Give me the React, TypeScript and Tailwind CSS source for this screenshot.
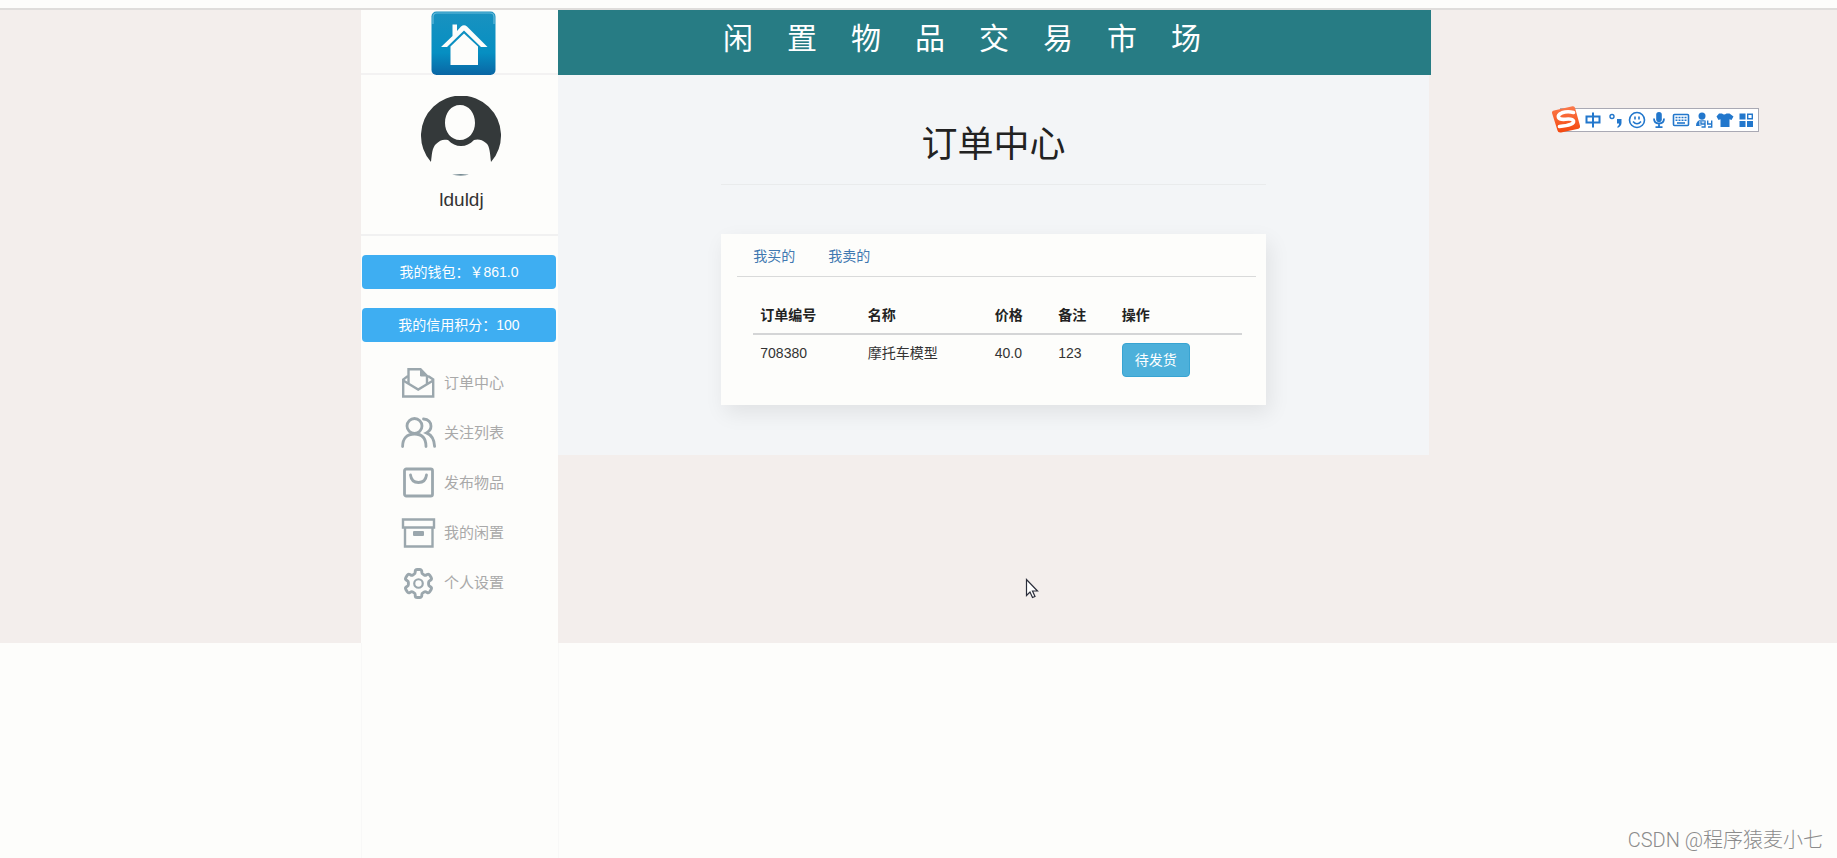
import React from 'react';

const ICON_PROPS = {
  viewBox: '0 0 35 33',
  fill: 'none',
  stroke: 'currentColor',
  strokeWidth: 2.8,
  className: 'w-[35px] h-[33px] shrink-0',
  'aria-hidden': true,
} as const;

const MailIcon = () => (
  <svg {...ICON_PROPS} strokeWidth={2.4}>
    <path d="M7 9 2.200 12.500v17h30v-17L27 9" />
    <path d="M7.500 16V2.200h12L26 9v8" />
    <path d="M2.200 13.500l15 9 15-9" />
    <path d="M19.500 2.200V9H26z" fill="currentColor" strokeWidth={1} />
  </svg>
);

const UsersIcon = () => (
  <svg {...ICON_PROPS} strokeLinecap="round">
    <circle cx="13.500" cy="9" r="7.500" />
    <path d="M1.600 29.500C1.600 21.500 6 17 13.500 17S25 21.500 25 29.500" />
    <path d="M22.500 2c5 .3 7.500 3.500 7.500 7.200 0 3-1.400 5-4.600 6.700 5.200 2 7.800 6.500 8.200 13.500" />
  </svg>
);

const BagIcon = () => (
  <svg {...ICON_PROPS}>
    <rect x="3.500" y="2" width="28" height="27" rx="1.800" />
    <path d="M9.500 8c.6 5 3.800 7.500 8 7.500s7.400-2.500 8-7.500" strokeLinecap="round" />
  </svg>
);

const BoxIcon = () => (
  <svg {...ICON_PROPS} strokeWidth={2.4}>
    <path d="M2 2.500h31v8H2z" />
    <path d="M4 10.500v19h27.500v-19" />
    <rect x="12" y="14" width="11" height="5" rx="1" fill="currentColor" stroke="none" />
  </svg>
);

const GearIcon = () => (
  <svg {...ICON_PROPS} viewBox="0 0 24 24" strokeWidth={2.1}>
    <path d="M12.900 1.800h-1.800a1.500 1.500 0 0 0-1.500 1.500v.6a1.500 1.500 0 0 1-.9 1.400l-.8.45a1.500 1.500 0 0 1-1.600 0l-.5-.3a1.500 1.500 0 0 0-2 .5l-1 1.700a1.500 1.500 0 0 0 .5 2l.6.4a1.500 1.500 0 0 1 .75 1.300v1.300a1.500 1.500 0 0 1-.75 1.300l-.6.4a1.500 1.500 0 0 0-.5 2l1 1.700a1.500 1.500 0 0 0 2 .5l.5-.3a1.500 1.500 0 0 1 1.600 0l.8.45a1.500 1.500 0 0 1 .9 1.400v.6a1.500 1.500 0 0 0 1.500 1.500h1.800a1.500 1.500 0 0 0 1.500-1.500v-.6a1.500 1.500 0 0 1 .9-1.400l.8-.45a1.500 1.500 0 0 1 1.600 0l.5.3a1.500 1.500 0 0 0 2-.5l1-1.700a1.500 1.500 0 0 0-.5-2l-.6-.4a1.500 1.500 0 0 1-.75-1.300v-1.300a1.500 1.500 0 0 1 .75-1.300l.6-.4a1.500 1.500 0 0 0 .5-2l-1-1.700a1.500 1.500 0 0 0-2-.5l-.5.3a1.500 1.500 0 0 1-1.600 0l-.8-.45a1.500 1.500 0 0 1-.9-1.400v-.6a1.500 1.500 0 0 0-1.500-1.500z" />
    <circle cx="12" cy="12" r="3.100" strokeWidth={1.600} />
  </svg>
);

const NAV = [
  { label: '订单中心', Icon: MailIcon },
  { label: '关注列表', Icon: UsersIcon },
  { label: '发布物品', Icon: BagIcon },
  { label: '我的闲置', Icon: BoxIcon },
  { label: '个人设置', Icon: GearIcon },
];

const ORDERS = [{ id: '708380', name: '摩托车模型', price: '40.0', note: '123', action: '待发货' }];

const HomeLogo = () => (
  <svg viewBox="0 0 65 64" className="w-[65px] h-16" role="img" aria-label="首页">
    <defs>
      <linearGradient id="logo" x1="0" y1="0" x2="0" y2="1">
        <stop offset="0" stopColor="#1a92c0" />
        <stop offset="0.65" stopColor="#068fc2" />
        <stop offset="1" stopColor="#0a66a4" />
      </linearGradient>
    </defs>
    <rect x="0.500" y="0.500" width="64" height="63.500" rx="5" fill="url(#logo)" />
    <path d="M2 13V6q0-4 4-4h53q4 0 4 4v7" fill="none" stroke="#7cc4e0" strokeWidth="1.200" opacity="0.8" />
    <path d="M10 36 21.500 25V13.500H26V20l4-4.500q3-2.500 6 0L56.500 36H50L33 19.500 16 36z" fill="#fdfdfb" />
    <path d="M33 22.500 47 35.500v18.500H19.500V35.500z" fill="#fdfdfb" />
  </svg>
);

const Avatar = () => (
  <svg viewBox="0 0 80 80" className="w-20 h-20" role="img" aria-label="lduldj">
    <path
      fill="#34393a"
      fillRule="evenodd"
      d="M10 66A40 40 0 1 1 70 66C69 58 69 50 65 47C61 43 56 43 53 44C49 48 45 50 40 50C35 50 31 48 27 44C22 43 19 44 15 48C11 52 11 58 10 66ZM39 9C30 9 24 17 24 27C24 36 30 44 39 44C48 44 54 36 54 27C54 17 48 9 39 9Z"
    />
    <path d="M31 78.800q9-1 17 0-8 1.500-17 0z" fill="#44606c" />
  </svg>
);

const Sidebar = () => (
  <aside className="w-[197px] shrink-0 bg-[#fdfdfb] pb-[35px]">
    <div className="h-[65px] border-b-2 border-[#f3f2f2] flex justify-center pl-2 pt-px">
      <HomeLogo />
    </div>
    <div className="h-[161px] border-b-2 border-[#f1f1f1] flex flex-col items-center pt-[21px] pl-1">
      <Avatar />
      <p className="mt-3 text-[19px] leading-6 text-[#333]">lduldj</p>
    </div>
    <div className="flex flex-col gap-[19px] pt-[19px] pl-px pr-0.5">
      <button className="h-[34px] rounded bg-[#3eaef2] text-white text-sm">我的钱包：￥861.0</button>
      <button className="h-[34px] rounded bg-[#3eaef2] text-white text-sm">我的信用积分：100</button>
    </div>
    <nav className="mt-4 pl-10">
      {NAV.map(({ label, Icon }) => (
        <a key={label} href="#" className="h-[50px] flex items-center gap-2 text-[#9ba7ad]">
          <Icon />
          <span className="text-[15px] text-[#a9a9a9]">{label}</span>
        </a>
      ))}
    </nav>
  </aside>
);

const OrderCard = () => (
  <section className="bg-[#fdfdfb] shadow-[4px_8px_20px_rgba(0,0,0,0.08)] pl-4 pr-2.5 pt-2 pb-5">
    <div className="h-[35px] border-b border-[#d9dada] flex items-center gap-[33px] pl-4 pb-1.5 text-sm text-[#4078b0]">
      <a href="#">我买的</a>
      <a href="#">我卖的</a>
    </div>
    <div className="mt-5 pl-4 pr-3.5">
      <table className="w-full table-fixed text-sm text-left text-[#333]">
        <thead className="text-[#222]">
          <tr className="border-b-2 border-[#d4d5d6]">
            <th className="w-[22%] px-[7px] py-2">订单编号</th>
            <th className="w-[26%] px-[7px] py-2">名称</th>
            <th className="w-[13%] px-[7px] py-2">价格</th>
            <th className="w-[13%] px-[7px] py-2">备注</th>
            <th className="w-[26%] px-[7px] py-2">操作</th>
          </tr>
        </thead>
        <tbody>
          {ORDERS.map((order) => (
            <tr key={order.id} className="align-top">
              <td className="px-[7px] py-2">{order.id}</td>
              <td className="px-[7px] py-2">{order.name}</td>
              <td className="px-[7px] py-2">{order.price}</td>
              <td className="px-[7px] py-2">{order.note}</td>
              <td className="px-[7px] py-2">
                <button className="h-[34px] px-3 rounded border border-[#38a4d2] bg-[#4db0da] text-white">
                  {order.action}
                </button>
              </td>
            </tr>
          ))}
        </tbody>
      </table>
    </div>
  </section>
);

// Floating input method bar
const ImeBar = () => (
  <div className="absolute left-[84.5%] top-[104px] h-7 flex items-center text-[#2277cc]" aria-hidden="true">
    <div className="mt-1 ml-2 h-6 w-[199px] border border-[#a9a9b4] bg-white flex items-center justify-end">
      <svg viewBox="0 0 176 20" className="w-[176px] h-5 shrink-0" fill="none" stroke="currentColor" strokeWidth="2">
        <path d="M4.500 6.500h13v6h-13zM11 2.500v15" />
        <g transform="translate(24 0)">
          <circle cx="6" cy="6.500" r="2" strokeWidth="1.400" />
          <path d="M11 9h4.500v4q0 3-4 5v-1.500q2-1.500 1.500-3h-2z" fill="currentColor" stroke="none" />
        </g>
        <g transform="translate(45 0)" strokeWidth="1.600">
          <circle cx="10" cy="10" r="7.500" />
          <path d="M6 11.500q4 4.500 8 0M8 6.500v3M12 6.500v3" />
        </g>
        <g transform="translate(67 0)" strokeWidth="1.800">
          <rect x="7.200" y="2" width="5.600" height="10" rx="2.800" fill="currentColor" stroke="none" />
          <path d="M5 8.500q0 5 5 5t5-5M10 13v4.500M6.500 17.200h7" />
        </g>
        <g transform="translate(89 0)" strokeWidth="1.600">
          <rect x="2.500" y="4.500" width="15" height="11" rx="1" />
          <path d="M4.500 7.500h11M4.500 10.200h11" strokeDasharray="2 1" />
          <path d="M6 13h8" />
        </g>
        <g transform="translate(112 0)">
          <circle cx="8" cy="6" r="3.500" fill="currentColor" stroke="none" />
          <path d="M2 16q0-6 6-6.500 3 0 4 2L9 16z" fill="currentColor" stroke="none" />
          <path d="M7 10.500v3.500h4v-3.500M11 11v6H7.500M13.700 10.500v3.500h4v-3.500M17.700 11v6H14" stroke="#fff" strokeWidth="3" />
          <path d="M7 10.500v3.500h4v-3.500M11 11v6H7.500M13.700 10.500v3.500h4v-3.500M17.700 11v6H14" strokeWidth="1.400" />
        </g>
        <path d="M137 3.500h3q2 2 4.500 0h3l4 3-2 3.500-2-.8V17h-9V9.200l-2 .8-2-3.500z" fill="currentColor" stroke="none" />
        <g transform="translate(154 0)">
          <path d="M3.500 3.500h6v6h-6zM3.500 11h6v6h-6zM11 11h6v6h-6z" fill="currentColor" stroke="none" />
          <path d="M11.700 4.200h4.600v4.600h-4.600z" strokeWidth="1.400" />
        </g>
      </svg>
    </div>
    <svg viewBox="0 0 28 28" className="absolute left-0 top-0.5 w-7 h-7">
      <defs>
        <linearGradient id="ime" x1="0" y1="0" x2="0" y2="1">
          <stop offset="0" stopColor="#fb7a4c" />
          <stop offset="1" stopColor="#f4470d" />
        </linearGradient>
      </defs>
      <path d="M2 4.500 20.500.2q2-.3 2.500 1.500l5 18q.5 2.300-1.500 3L9 26.500q-3 .5-3.500-2L0 7q-.3-2 2-2.500z" fill="url(#ime)" />
      <path d="M21.500 6.500q-6-1.500-11.500.3-4.500 1.800-3.500 4.700 1 2.300 7 1.800 7-.8 8 1.700 1 4-14 5.500" fill="none" stroke="#fff" strokeWidth="3.600" strokeLinecap="round" />
    </svg>
  </div>
);

const App: React.FC = () => {
  return (
    <div className="relative min-h-screen flex flex-col bg-[#fdfdfb] font-['Liberation_Sans','Noto_Sans_CJK_SC',sans-serif]">
      <div className="h-2.5 border-b-2 border-[#dfdddb]" />

      <div className="bg-[#f3eeec] pl-[19.65%] pr-[22.1%]">
        <div className="flex">
          <Sidebar />
          <div className="grow min-w-0">
            <header className="h-[65px] bg-[#277c84] pl-[165px] pt-1.5">
              <h1 className="flex gap-[34px] text-[30px] leading-[45px] text-white">
                {[...'闲置物品交易市场'].map((char) => (
                  <span key={char}>{char}</span>
                ))}
              </h1>
            </header>
            <main className="mr-0.5 bg-[#f3f5f7] pt-[50px] pb-[50px]">
              <div className="w-5/8 mx-auto">
                <h2 className="text-4xl text-center text-[#222]">订单中心</h2>
                <hr className="mt-[19px] mb-[49px] border-[#e9ebec]" />
                <OrderCard />
              </div>
            </main>
          </div>
        </div>
      </div>
      <div className="grow flex pl-[19.65%]">
        <div className="w-[198px] border-x border-[#f8f8f7]" />
      </div>

      <ImeBar />
      <svg viewBox="0 0 14 21" className="absolute left-[55.8%] top-[578px] w-3.5 h-[21px]" aria-hidden="true">
        <path d="M1.500 1.500v16l3.500-3.500 2.500 5.500 2.500-1-2.500-5.500h5z" fill="#fff" stroke="#2b2e3b" strokeWidth="1.200" />
      </svg>
      <p className="absolute right-3.5 bottom-1 text-xl leading-7 text-[#8b8b8b] font-light font-[Roboto,'Noto_Sans_CJK_SC',sans-serif]">
        CSDN @程序猿麦小七
      </p>
    </div>
  );
};

export default App;
